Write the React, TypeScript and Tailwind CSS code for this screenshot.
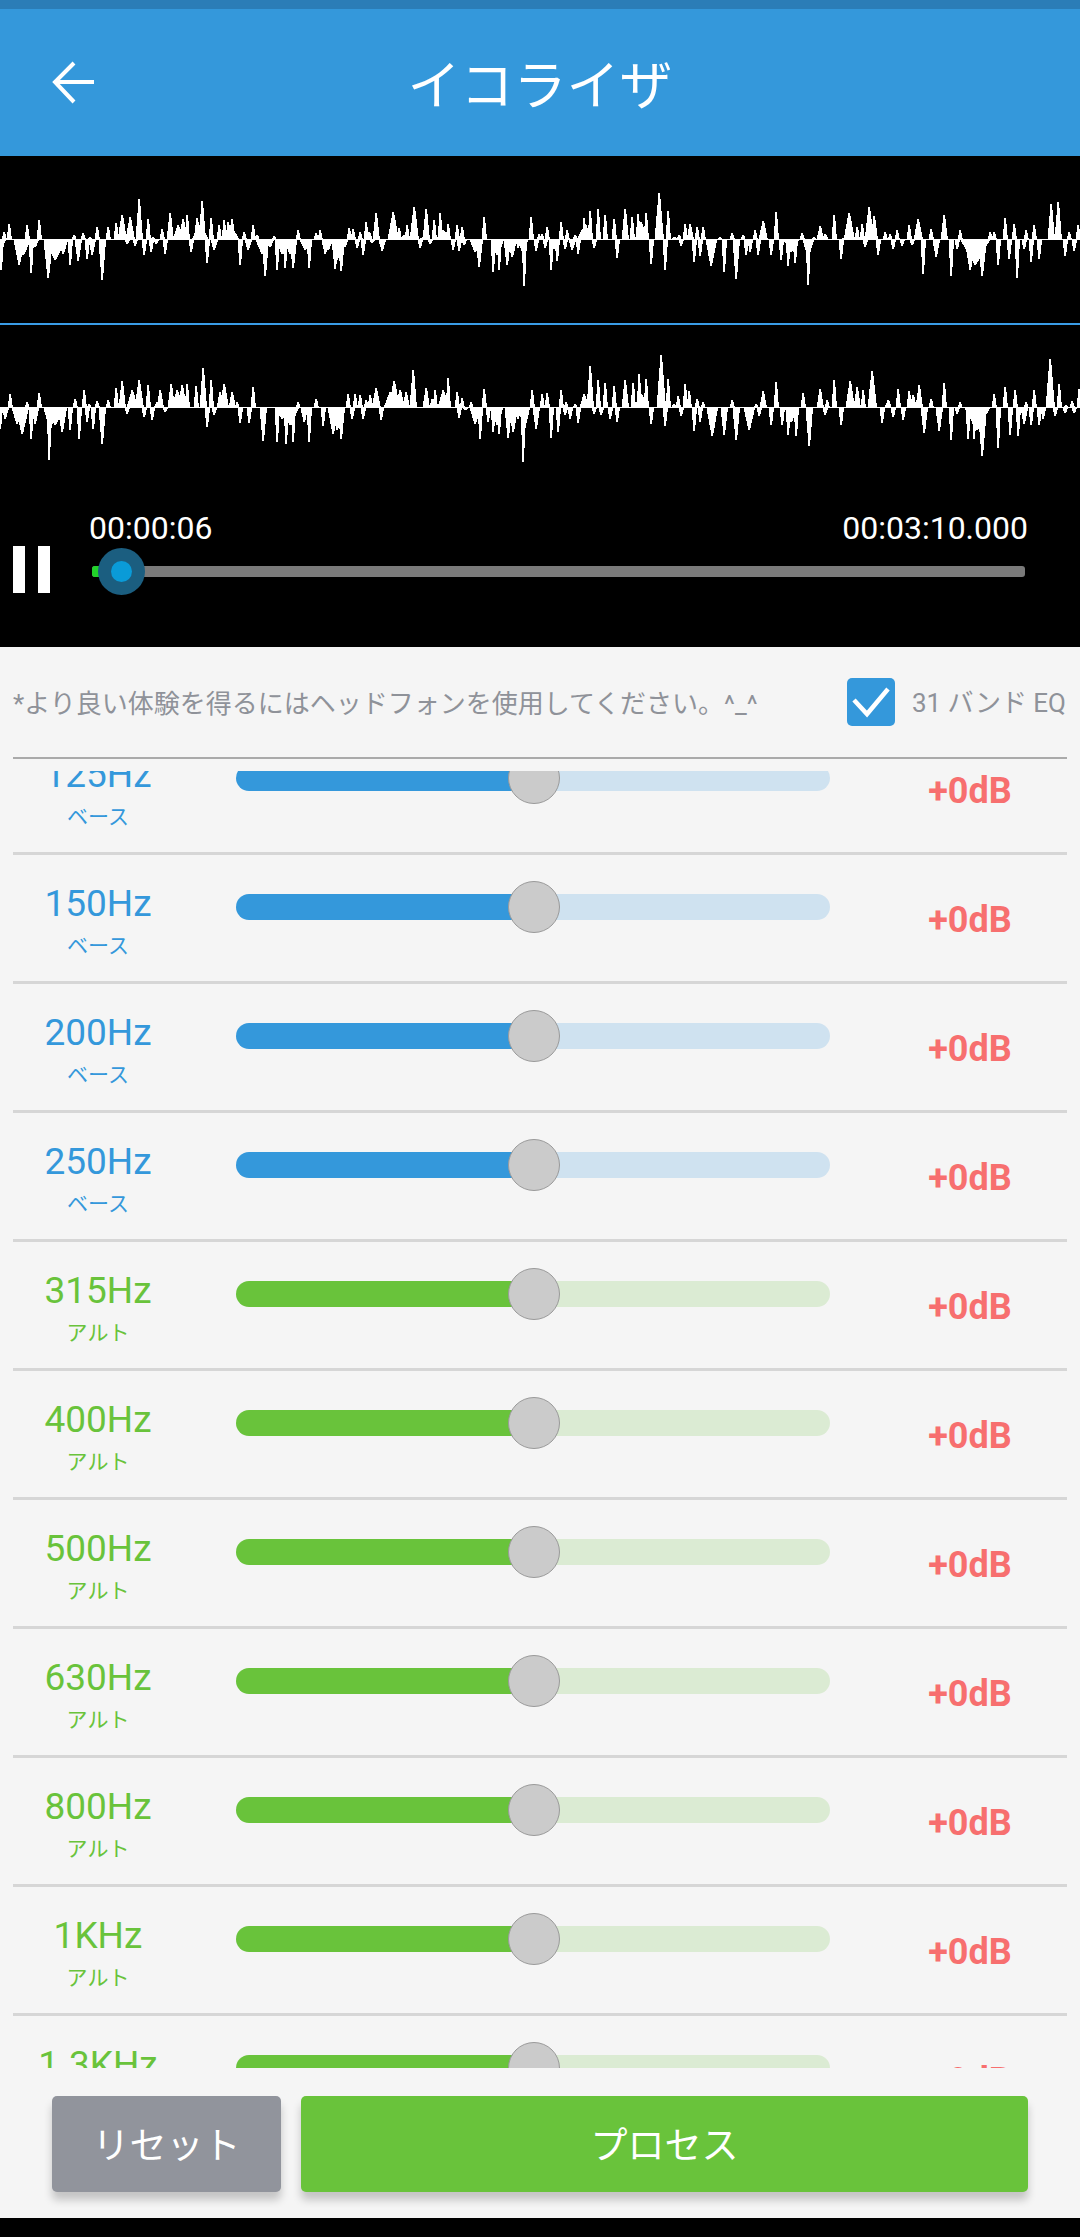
import React from "react";

type Peak = [number, number, number?];

// waveform peaks read off the screenshot: [x, height, half width]
const TOP_L: Peak[] = [[4,8],[9,16],[27,15],[39,20],[74,5],[83,7],[90,3],[97,13],[108,13],[116,17],[122,25,4],[130,23,4],[139,41,3],[148,21],[153,3],[162,11],[170,27,3],[178,15,5],[183,21,4],[187,25],[197,22,3],[202,39,3],[200,15,8],[211,22],[219,15],[224,20],[228,18],[232,21],[230,15,9],[244,8],[253,15],[257,5],[274,4],[298,10],[316,7],[320,10],[349,12],[353,11],[360,8],[366,18],[369,8,3],[376,27,3],[393,28,5],[399,12],[407,15],[404,5,4],[414,33,4],[426,31,3],[423,3,5],[434,20],[440,27],[443,10,7],[448,16],[457,15],[462,13],[467,1],[484,23],[531,23],[539,6],[542,6],[547,13],[561,18],[567,10],[575,5],[584,22],[582,10,5],[590,29],[586,15,3],[598,31],[605,25],[614,21],[625,31,3],[632,23],[638,26],[646,27],[641,18,6],[659,47,4],[668,29],[674,3,3],[679,5],[685,16],[690,16,3],[697,13],[703,13],[720,3],[732,7],[743,5],[755,10],[763,19,4],[776,28],[802,7],[814,3],[820,14,3],[825,6,3],[834,25],[843,2],[849,27,5],[857,13],[862,16],[869,33,4],[874,24,3],[885,8],[890,6],[897,10],[903,1],[909,15],[918,21,4],[931,11],[944,25,3],[960,10],[990,8],[994,8],[1005,22],[1014,16],[1026,10],[1034,15],[1051,36,3],[1058,38,3],[1054,3,8],[1069,8],[1078,15]];

const BOT_L: Peak[] = [[1,30],[3,4],[19,25,5],[23,15,7],[31,33],[35,7,3],[48,38,4],[55,20,10],[63,14,4],[70,25,2],[78,21,3],[87,19],[92,15,3],[102,40,3],[127,4],[135,6],[144,15],[151,12],[156,4],[165,14],[191,12],[207,23],[214,10,3],[240,25,2],[248,10,3],[265,36,3],[262,14,6],[270,7,3],[277,30],[285,28],[282,14,6],[293,28,3],[290,14,6],[309,28],[305,10,5],[325,14,3],[328,10,4],[335,29,3],[341,31,3],[337,20,6],[345,7],[357,8],[363,15],[372,3],[382,11,3],[420,8],[430,4],[453,10],[459,11],[464,5],[479,27,3],[475,12,5],[493,32],[499,30],[497,15,6],[507,25,3],[512,17,4],[518,8],[524,46,2],[523,15,4],[536,11],[545,8],[551,30],[557,21,2],[554,9,5],[565,9],[572,10,3],[578,14],[594,8],[617,18],[651,24],[665,30],[681,6],[694,22],[700,16],[711,26,5],[724,32],[736,39,3],[746,15],[750,12],[758,15],[771,15],[781,20],[788,26,2],[795,23],[791,12,7],[808,45,2],[808,17,5],[841,19],[865,7],[878,15],[893,9],[902,6],[912,5],[923,34],[936,17,3],[951,36],[957,9],[970,30,5],[982,36,4],[975,25,14],[998,25],[1009,19],[1017,38],[1024,9],[1031,22],[1039,19],[1065,16],[1074,11]];

const TOP_R: Peak[] = [[10,14,2],[27,6],[39,15],[75,9],[84,18],[89,4],[97,7],[108,8],[116,20],[122,27,3],[132,18,5],[139,28,4],[148,23],[157,6,3],[160,18,3],[171,24,3],[177,18,5],[182,23,4],[187,24],[196,22],[203,40,3],[211,28],[224,24,4],[220,16,3],[232,16,3],[237,6],[253,21],[298,6],[316,9],[348,14],[355,14],[360,13],[366,8],[370,13],[376,20,4],[394,27,5],[390,16,6],[400,18,4],[406,16,3],[413,38,3],[426,20,3],[432,9],[435,18],[448,30],[443,18,5],[457,16],[462,10],[471,6],[484,19],[532,18],[542,14],[547,15],[561,18],[566,6],[575,4],[584,14,4],[590,42,3],[598,28],[605,25],[614,22],[625,28,3],[633,25],[639,34],[646,29],[641,14,7],[661,53,4],[668,29],[674,4,3],[678,12],[685,24],[689,17],[697,9],[703,6],[720,1],[732,8],[756,4],[763,17,3],[776,26],[803,15],[820,19,3],[827,8],[834,28],[850,27,4],[857,21,3],[863,18],[872,37,4],[888,8,3],[898,19],[909,17],[913,13,3],[919,23,3],[931,9],[944,25,2],[960,6],[994,14],[1005,21,2],[1015,18],[1026,6],[1034,18],[1050,49,4],[1059,24,2],[1066,3],[1072,7],[1079,19]];

const BOT_R: Peak[] = [[0,21,2],[5,11,3],[22,26,6],[17,16,5],[31,31],[35,16,3],[49,52,2],[55,17,9],[62,24,4],[50,22,6],[70,22],[79,31],[87,14],[93,21],[102,36,3],[127,6],[144,9],[152,12],[165,4],[207,19],[214,7],[240,15,2],[249,15,2],[263,33,3],[277,34],[286,36],[293,34],[282,11,5],[290,17,8],[309,34],[304,14,3],[323,18],[333,26,5],[341,31,3],[337,22,6],[352,11],[363,11],[381,12,2],[459,10],[465,2],[480,31],[475,16,5],[493,24],[499,26],[497,17,5],[508,30,3],[513,24,4],[488,14,2],[518,11],[523,54,2],[524,22,5],[536,21,3],[551,30],[558,24],[565,7],[570,11],[578,15],[594,6],[601,7],[610,11],[617,14],[651,16],[665,18],[681,8],[694,23],[700,14],[712,28,5],[724,27,3],[736,32,3],[749,22,5],[759,8],[771,17],[788,27],[796,28],[791,14,6],[782,17],[809,38,3],[825,7],[841,17],[882,15],[893,9],[903,12],[924,25,3],[939,23,3],[951,32],[957,6],[968,31],[974,31],[982,48,4],[977,22,12],[998,40],[1010,27],[1018,28],[1024,16,3],[1031,17],[1039,17,2],[1043,11],[1055,8],[1065,5],[1074,5]];

function peakPath(peaks: Peak[], mid: number, dir: number) {
  return peaks
    .map(([x, h, w = 2]) => {
      const y = mid - dir * h;
      return `M${x - w - 0.5} ${mid}L${x - 0.5} ${y}L${x + 1} ${y}L${x + w + 1} ${mid}Z`;
    })
    .join("");
}

function Wave({ top, bottom, height, mid }: { top: Peak[]; bottom: Peak[]; height: number; mid: number }) {
  return (
    <svg width="1080" height={height} viewBox={`0 0 1080 ${height}`} shapeRendering="crispEdges" className="block shrink-0">
      <rect x="0" y={mid - 1} width="1080" height="1" fill="#fff" />
      <path d={peakPath(top, mid, 1)} fill="#fff" />
      <path d={peakPath(bottom, mid, -1)} fill="#fff" />
    </svg>
  );
}

type Band = { hz: string; name: string; kind: "bass" | "alto" };

const BANDS: Band[] = [
  { hz: "125Hz", name: "ベース", kind: "bass" },
  { hz: "150Hz", name: "ベース", kind: "bass" },
  { hz: "200Hz", name: "ベース", kind: "bass" },
  { hz: "250Hz", name: "ベース", kind: "bass" },
  { hz: "315Hz", name: "アルト", kind: "alto" },
  { hz: "400Hz", name: "アルト", kind: "alto" },
  { hz: "500Hz", name: "アルト", kind: "alto" },
  { hz: "630Hz", name: "アルト", kind: "alto" },
  { hz: "800Hz", name: "アルト", kind: "alto" },
  { hz: "1KHz", name: "アルト", kind: "alto" },
  { hz: "1.3KHz", name: "アルト", kind: "alto" },
];

const KIND_STYLES = {
  bass: { text: "text-[#3498db]", fill: "bg-[#3498db]", rest: "bg-[#cfe2f0]" },
  alto: { text: "text-[#69c33b]", fill: "bg-[#69c33b]", rest: "bg-[#dbebd3]" },
};

function BandRow({ band }: { band: Band }) {
  const s = KIND_STYLES[band.kind];
  return (
    <div className="flex h-[129px] items-center border-b-[3px] border-[#d6d6d6]">
      <div className={`mt-[6px] flex w-[170px] flex-col items-center ${s.text}`}>
        <span className="text-[37px] leading-[44px]">{band.hz}</span>
        <span className="mt-[6px] text-[21px] leading-[28px]">{band.name}</span>
      </div>
      <div className="relative mb-[22px] ml-[53px] flex h-[26px] w-[594px]">
        <div className={`w-[297px] rounded-l-[13px] ${s.fill}`} />
        <div className={`flex-1 rounded-r-[13px] ${s.rest}`} />
        <div className="absolute left-[272px] top-[-13px] h-[52px] w-[52px] rounded-full border border-[#9a9a9a] bg-[#cbcbcb]" />
      </div>
      <div className="ml-[55px] mt-[4px] w-[170px] text-center text-[36px] font-bold text-[#f76f6f]">+0dB</div>
    </div>
  );
}

export default function App() {
  return (
    <div className="flex h-[2237px] w-[1080px] flex-col overflow-hidden bg-[#f5f5f5] font-['Roboto','Noto_Sans_CJK_JP',sans-serif]">
      <div className="h-[9px] shrink-0 bg-[#2b7db7]" />

      <header className="grid h-[147px] shrink-0 grid-cols-[1fr_auto_1fr] items-center bg-[#3498db] text-white">
        <div className="pl-[52px]">
          <svg width="44" height="44" viewBox="0 0 44 44" fill="none" stroke="#fff" strokeWidth="4" className="block">
            <path d="M3 21H42M22 2L3 21L22 41" />
          </svg>
        </div>
        <h1 className="pt-[10px] text-[53px] font-normal leading-none">イコライザ</h1>
        <div />
      </header>

      <section className="flex h-[491px] shrink-0 flex-col bg-black text-white">
        <Wave top={TOP_L} bottom={BOT_L} height={167} mid={84} />
        <div className="h-[2px] shrink-0 bg-[#3a9ce6]" />
        <Wave top={TOP_R} bottom={BOT_R} height={166} mid={83} />
        <div className="flex justify-between pl-[89px] pr-[52px] pt-[19px] text-[32px] leading-[36px]">
          <span>00:00:06</span>
          <span>00:03:10.000</span>
        </div>
        <div className="mt-[2px] flex h-[47px] items-center pl-[13px] pr-[55px]">
          <div className="-mt-[2px] flex h-[47px] w-[37px] justify-between self-start">
            <div className="w-[12px] bg-white" />
            <div className="w-[12px] bg-white" />
          </div>
          <div className="relative ml-[42px] h-[11px] flex-1 rounded-[3px] bg-[#7a7a7a]">
            <div className="absolute left-0 top-0 h-full w-[12px] rounded-l-[3px] bg-[#22d32a]" />
            <div className="absolute left-[6px] top-[-18px] flex h-[47px] w-[47px] items-center justify-center rounded-full bg-[#1b5e80]">
              <div className="h-[21px] w-[21px] rounded-full bg-[#0a9bd8]" />
            </div>
          </div>
        </div>
      </section>

      <div className="mx-[13px] flex h-[112px] shrink-0 items-center justify-between border-b-2 border-[#aaaaaa] text-[#8f9299]">
        <p className="mt-[4px] text-[26px] leading-none">*より良い体験を得るにはヘッドフォンを使用してください。^_^</p>
        <label className="flex items-center">
          <span className="flex h-[48px] w-[48px] items-center justify-center rounded-[5px] bg-[#3498db]">
            <svg width="48" height="48" viewBox="0 0 48 48" fill="none" stroke="#fff" strokeWidth="4.5">
              <path d="M7 22L20 36L41 11" />
            </svg>
          </span>
          <span className="ml-[17px] mt-[2px] mr-[1px] whitespace-nowrap text-[26px] leading-none">31 バンド EQ</span>
        </label>
      </div>

      <div className="mx-[13px] mt-[12px] h-[1297px] shrink-0 overflow-hidden">
        <div className="mt-[-45px]">
          {BANDS.map((b) => (
            <BandRow key={b.hz} band={b} />
          ))}
        </div>
      </div>

      <footer className="flex flex-1 gap-[20px] px-[52px] pt-[28px]">
        <button className="h-[96px] w-[229px] rounded-[5px] bg-[#91949c] pt-[6px] text-[37px] text-white shadow-[0_8px_8px_rgba(0,0,0,0.2)]">リセット</button>
        <button className="h-[96px] flex-1 rounded-[5px] bg-[#69c33b] pt-[6px] text-[37px] text-white shadow-[0_8px_8px_rgba(0,0,0,0.2)]">プロセス</button>
      </footer>

      <div className="h-[19px] shrink-0 bg-black" />
    </div>
  );
}
